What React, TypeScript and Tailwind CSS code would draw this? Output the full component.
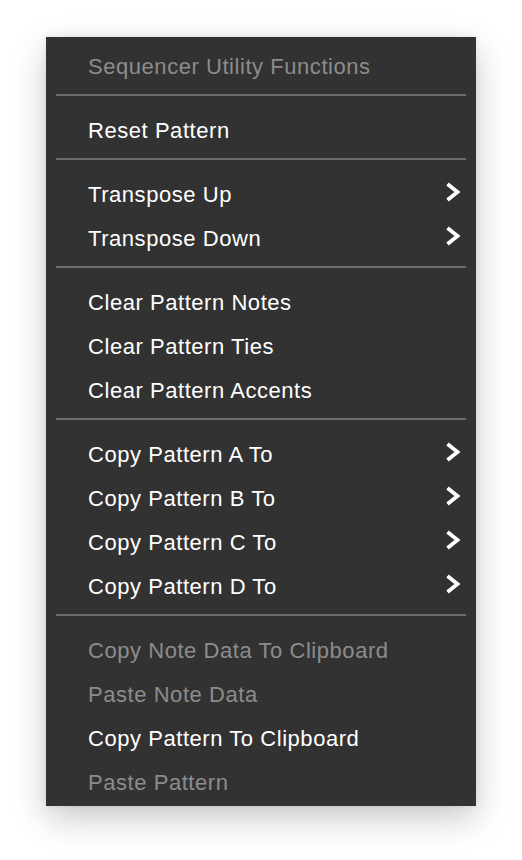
import React from 'react';

type Item = { label: string; disabled?: boolean; sub?: boolean };

const groups: Item[][] = [
    [{ label: 'Sequencer Utility Functions', disabled: true }],
    [{ label: 'Reset Pattern' }],
    [
        { label: 'Transpose Up', sub: true },
        { label: 'Transpose Down', sub: true },
    ],
    [
        { label: 'Clear Pattern Notes' },
        { label: 'Clear Pattern Ties' },
        { label: 'Clear Pattern Accents' },
    ],
    [
        { label: 'Copy Pattern A To', sub: true },
        { label: 'Copy Pattern B To', sub: true },
        { label: 'Copy Pattern C To', sub: true },
        { label: 'Copy Pattern D To', sub: true },
    ],
    [
        { label: 'Copy Note Data To Clipboard', disabled: true },
        { label: 'Paste Note Data', disabled: true },
        { label: 'Copy Pattern To Clipboard' },
        { label: 'Paste Pattern', disabled: true },
    ],
];

const Chevron = () => (
    <svg width="16" height="20" viewBox="0 0 16 20" fill="none" className="mb-[4px]">
        <path d="M2.5 2 L12.5 10 L2.5 18" stroke="#ffffff" strokeWidth="3.8" strokeLinecap="butt" strokeLinejoin="miter" />
    </svg>
);

const MenuRow = ({ item }: { item: Item }) => (
    <div className="h-[44px] flex items-center justify-between pl-[42px] pr-[15px]">
        <span className={`text-[22px] tracking-[0.55px] ${item.disabled ? 'text-[#8c8c8c]' : 'text-white'}`}>
            {item.label}
        </span>
        {item.sub && <Chevron />}
    </div>
);

export default function App() {
    return (
        <div className="min-h-[860px] w-[522px] bg-white pt-[37px] pl-[46px]" style={{ fontFamily: '"Liberation Sans", Arial, sans-serif' }}>
            <div className="w-[430px] bg-[#323232] pt-[7px] pb-[2px] shadow-[0_12px_32px_rgba(0,0,0,0.22),0_0_6px_rgba(0,0,0,0.08)]">
                {groups.map((group, gi) => (
                    <div key={gi}>
                        {gi > 0 && (
                            <div className="pt-[6px] pb-[12px] px-[10px]">
                                <div className="h-[2px] bg-[#6c6c6c]" />
                            </div>
                        )}
                        {group.map(item => (
                            <MenuRow key={item.label} item={item} />
                        ))}
                    </div>
                ))}
            </div>
        </div>
    );
}
